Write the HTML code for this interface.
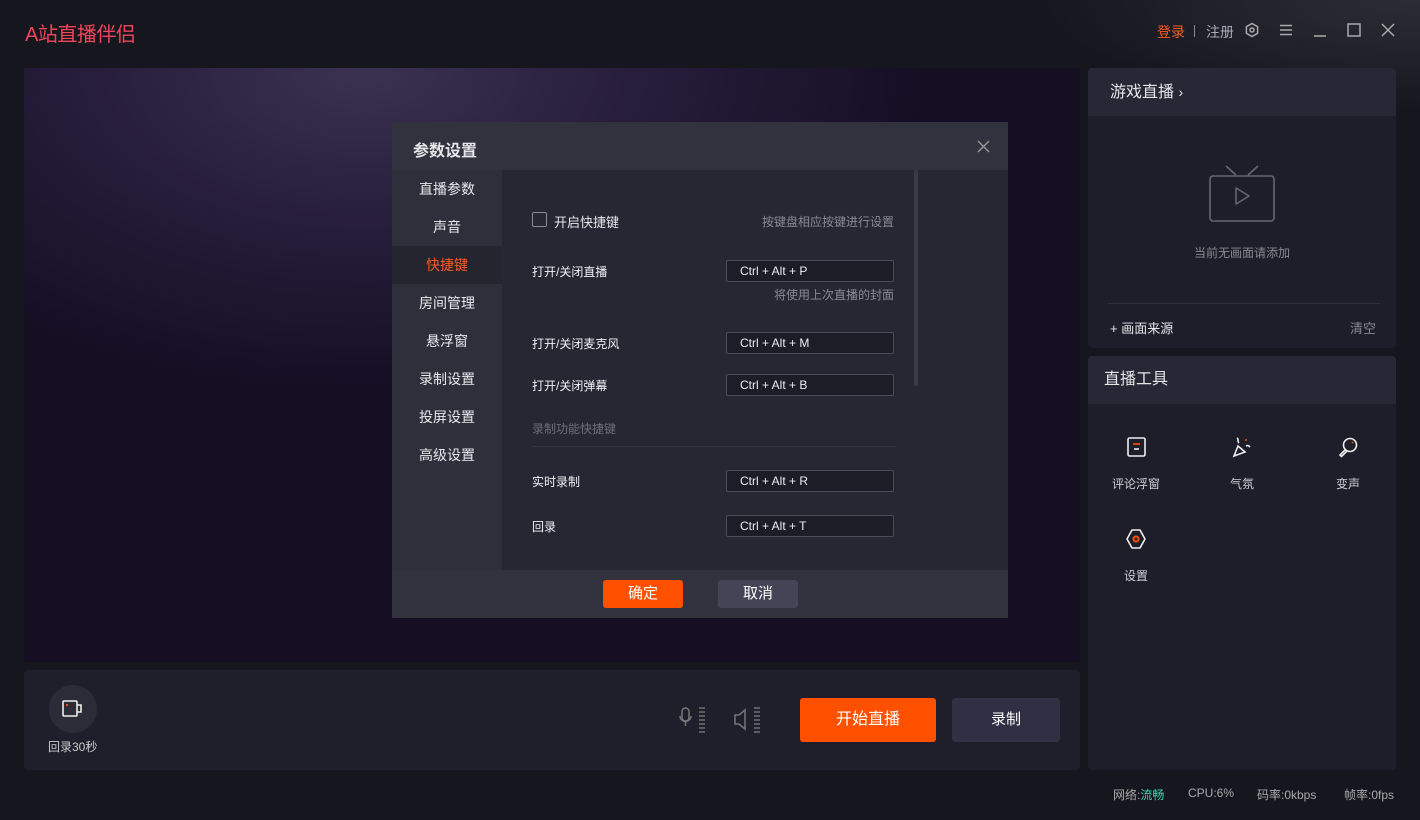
<!DOCTYPE html>
<html><head><meta charset="utf-8"><style>
*{margin:0;padding:0;box-sizing:border-box}
body{width:1420px;height:820px;background:#16161f;font-family:"Liberation Sans","Noto Sans CJK SC",sans-serif;color:#e6e6ea;position:relative;overflow:hidden;font-size:13px}
.a{position:absolute}
.logo{left:25px;top:18px;font-size:20px;color:#f0455a;letter-spacing:-0.5px}
.preview{left:24px;top:68px;width:1056px;height:594px;background:radial-gradient(ellipse 560px 320px at 340px 0px,#3b3252 0%,#281f3d 45%,#150f24 100%)}
.dlg{left:392px;top:122px;width:616px;height:496px;background:#272733}
.dh{left:0;top:0;width:616px;height:48px;background:#32323e}
.side{left:0;top:48px;width:110px;height:400px;background:#2f2f3b}
.side div{height:38px;line-height:38px;text-align:center;font-size:14px;color:#e8e8ee}
.side .on{background:#25252f;color:#ff5a1f}
.df{left:0;top:448px;width:616px;height:48px;background:#32323e}
.lab{font-size:12px;color:#f0f0f5}
.key{width:168px;height:22px;border:1px solid #4a4a58;background:#1d1d28;border-radius:2px;font-size:12px;line-height:20px;padding-left:13px;color:#ececf2}
.gray{color:#8a8a96;font-size:12px}
.btn{height:28px;line-height:28px;text-align:center;font-size:15px;border-radius:3px}
.panel{background:#1e1e2a;border-radius:4px;overflow:hidden}
.ph{height:48px;background:#272735;font-size:16px;line-height:48px;padding-left:22px}
.tool{text-align:center;font-size:12px;color:#cfcfd8;width:80px}
</style></head><body>
<div class="a" style="right:0;top:0;width:460px;height:120px;background:radial-gradient(ellipse 380px 110px at 100% 0%,#2c2c35 0%,#22222b 50%,rgba(22,22,31,0) 100%)"></div>
<div class="a logo">A站直播伴侣</div>
<div class="a" style="left:1157px;top:22px;font-size:14px;color:#ff5a1f">登录</div>
<div class="a" style="left:1194px;top:25px;width:1px;height:12px;background:#888"></div>
<div class="a" style="left:1206px;top:22px;font-size:14px;color:#aab">注册</div>
<svg class="a" style="left:1244px;top:22px" width="16" height="16" viewBox="0 0 16 16" fill="none" stroke="#aaa" stroke-width="1.5"><path d="M8 1.5l5.6 3.2v6.6L8 14.5 2.4 11.3V4.7z"/><circle cx="8" cy="8" r="2"/></svg>
<svg class="a" style="left:1279px;top:24px" width="14" height="12" stroke="#aaa" stroke-width="1.5"><path d="M1 1.5h12M1 6h12M1 10.5h12"/></svg>
<svg class="a" style="left:1313px;top:24px" width="14" height="14" stroke="#aaa" stroke-width="1.5"><path d="M1 12h12"/></svg>
<svg class="a" style="left:1347px;top:23px" width="14" height="14" fill="none" stroke="#aaa" stroke-width="1.5"><rect x="1" y="1" width="12" height="12"/></svg>
<svg class="a" style="left:1381px;top:23px" width="14" height="14" stroke="#aaa" stroke-width="1.5"><path d="M1 1l12 12M13 1L1 13"/></svg>

<div class="a preview"></div>

<div class="a dlg">
 <div class="a dh"><div class="a" style="left:21px;top:15px;font-size:16px;font-weight:bold">参数设置</div>
  <svg class="a" style="left:585px;top:18px" width="13" height="13" stroke="#999" stroke-width="1.4"><path d="M1 1l11 11M12 1L1 12"/></svg></div>
 <div class="a side"><div>直播参数</div><div>声音</div><div class="on">快捷键</div><div>房间管理</div><div>悬浮窗</div><div>录制设置</div><div>投屏设置</div><div>高级设置</div></div>
 <div class="a" style="left:522px;top:48px;width:4px;height:216px;background:#3a3a48;border-radius:2px"></div>
 <div class="a" style="left:140px;top:90px;width:15px;height:15px;border:1px solid #8a8a96;border-radius:2px"></div>
 <div class="a" style="left:162px;top:90px;font-size:13px">开启快捷键</div>
 <div class="a gray" style="right:114px;top:91px">按键盘相应按键进行设置</div>
 <div class="a lab" style="left:140px;top:141px">打开/关闭直播</div>
 <div class="a key" style="left:334px;top:138px">Ctrl + Alt + P</div>
 <div class="a gray" style="right:114px;top:164px">将使用上次直播的封面</div>
 <div class="a lab" style="left:140px;top:213px">打开/关闭麦克风</div>
 <div class="a key" style="left:334px;top:210px">Ctrl + Alt + M</div>
 <div class="a lab" style="left:140px;top:255px">打开/关闭弹幕</div>
 <div class="a key" style="left:334px;top:252px">Ctrl + Alt + B</div>
 <div class="a gray" style="left:140px;top:298px;color:#6e6e7a">录制功能快捷键</div>
 <div class="a" style="left:140px;top:324px;width:364px;height:1px;background:#33333f"></div>
 <div class="a lab" style="left:140px;top:351px">实时录制</div>
 <div class="a key" style="left:334px;top:348px">Ctrl + Alt + R</div>
 <div class="a lab" style="left:140px;top:396px">回录</div>
 <div class="a key" style="left:334px;top:393px">Ctrl + Alt + T</div>
 <div class="a df">
  <div class="a btn" style="left:211px;top:10px;width:80px;background:#ff5000;color:#fff">确定</div>
  <div class="a btn" style="left:326px;top:10px;width:80px;background:#444456;color:#fff">取消</div>
 </div>
</div>

<div class="a" style="left:24px;top:670px;width:1056px;height:100px;background:#1f1f2b;border-radius:3px"></div>
<div class="a" style="left:49px;top:685px;width:48px;height:48px;border-radius:50%;background:#2c2c38"></div>
<svg class="a" style="left:62px;top:700px" width="22" height="18" fill="none" stroke="#eee" stroke-width="1.6"><rect x="1" y="1" width="14" height="15" rx="1"/><path d="M15 5h4v7h-4"/><rect x="4" y="4" width="2" height="2" fill="#ff5000" stroke="none"/></svg>
<div class="a" style="left:48px;top:738px;font-size:12px;color:#ccc">回录30秒</div>
<svg class="a" style="left:678px;top:706px" width="30" height="28" fill="none" stroke="#777" stroke-width="1.5"><rect x="4" y="2" width="7" height="13" rx="3.5"/><path d="M2 10a5.5 5.5 0 0 0 11 0M7.5 16v4"/><path d="M21 2h6M21 6h6M21 10h6M21 14h6M21 18h6M21 22h6M21 26h6" stroke-width="1.8" stroke="#666"/></svg>
<svg class="a" style="left:733px;top:706px" width="30" height="28" fill="none" stroke="#777" stroke-width="1.5"><path d="M2 9h4l6-5v19l-6-5H2z"/><path d="M21 2h6M21 6h6M21 10h6M21 14h6M21 18h6M21 22h6M21 26h6" stroke-width="1.8" stroke="#666"/></svg>
<div class="a btn" style="left:800px;top:698px;width:136px;height:44px;line-height:44px;background:#ff5000;color:#fff;font-size:16px">开始直播</div>
<div class="a btn" style="left:952px;top:698px;width:108px;height:44px;line-height:44px;background:#303044;color:#fff;font-size:15px">录制</div>

<div class="a panel" style="left:1088px;top:68px;width:308px;height:280px">
 <div class="ph">游戏直播 <span style="font-size:14px">›</span></div>
 <svg class="a" style="left:120px;top:97px" width="68" height="58" fill="none" stroke="#666670" stroke-width="1.6"><rect x="2" y="11" width="64" height="45" rx="3"/><path d="M18 1l10 9M50 1l-10 9M28 23v16l13-8z" stroke-linejoin="round"/></svg>
 <div class="a" style="left:0;width:308px;top:176px;text-align:center;font-size:12px;color:#888892">当前无画面请添加</div>
 <div class="a" style="left:20px;top:235px;width:272px;height:1px;background:#30303c"></div>
 <div class="a" style="left:22px;top:250px;font-size:13px">+ 画面来源</div>
 <div class="a" style="right:20px;top:250px;font-size:13px;color:#888892">清空</div>
</div>

<div class="a panel" style="left:1088px;top:356px;width:308px;height:414px">
 <div class="ph" style="padding-left:16px">直播工具</div>
 <div class="a tool" style="left:8px;top:80px"><svg width="22" height="22" fill="none" stroke="#eee" stroke-width="1.6" style="margin-bottom:14px"><rect x="3" y="2" width="17" height="18" rx="1.5"/><path d="M8 8h7" stroke="#ff5000"/><path d="M9 13h5"/></svg><br>评论浮窗</div>
 <div class="a tool" style="left:114px;top:80px"><svg width="22" height="22" fill="none" stroke="#eee" stroke-width="1.6" style="margin-bottom:14px"><path d="M3 20l4-10 7 6zM6 2c2 1 0 3 2 5M15 10c2-1 3 0 4 1"/><circle cx="15" cy="4" r="1" fill="#ff5000" stroke="none"/></svg><br>气氛</div>
 <div class="a tool" style="left:220px;top:80px"><svg width="22" height="22" fill="none" stroke="#eee" stroke-width="1.6" style="margin-bottom:14px"><circle cx="13" cy="9" r="6.5"/><path d="M8.5 13.5L3 19l1.5 1.5L10 15"/><path d="M15 7l1-1" stroke="#ff5000"/></svg><br>变声</div>
 <div class="a tool" style="left:8px;top:172px"><svg width="24" height="22" fill="none" stroke="#eee" stroke-width="1.6" style="margin-bottom:14px"><path d="M8 2h8l5 9-5 9H8l-5-9z" stroke-linejoin="round"/><circle cx="12" cy="11" r="2.5" stroke="#ff5000" stroke-width="2"/></svg><br>设置</div>
</div>

<div class="a" style="left:1113px;top:786px;font-size:12px;color:#aaa">网络:<span style="color:#3fd9a8">流畅</span></div>
<div class="a" style="left:1188px;top:786px;font-size:12px;color:#aaa">CPU:6%</div>
<div class="a" style="left:1257px;top:786px;font-size:12px;color:#aaa">码率:0kbps</div>
<div class="a" style="left:1344px;top:786px;font-size:12px;color:#aaa">帧率:0fps</div>
</body></html>
